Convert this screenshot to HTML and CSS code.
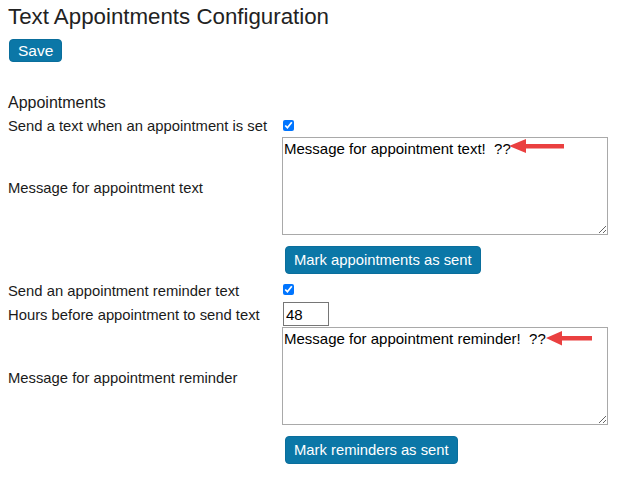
FILE: index.html
```html
<!DOCTYPE html>
<html>
<head>
<meta charset="utf-8">
<link rel="stylesheet" href="styles.css">
</head>
<body>
<h1 class="title">Text Appointments Configuration</h1>
<button class="btn btn-save">Save</button>
<h2 class="section">Appointments</h2>
<div class="form">
  <div class="label">Send a text when an appointment is set</div>
  <div class="cell cell-check"><input type="checkbox" class="check" checked></div>

  <div class="label label-ta">Message for appointment text</div>
  <div class="cell">
    <div class="ta-wrap">
      <textarea class="ta">Message for appointment text!  ??</textarea>
      <svg class="arrow arrow-1" width="60" height="16" viewBox="0 0 60 16">
        <polygon points="0,7 17,0 17,5 55,5 55,9.5 17,9.5 17,14" fill="#ea4040"/>
      </svg>
    </div>
  </div>

  <div class="label"></div>
  <div class="cell cell-btn"><button class="btn">Mark appointments as sent</button></div>

  <div class="label">Send an appointment reminder text</div>
  <div class="cell cell-check2"><input type="checkbox" class="check" checked></div>

  <div class="label">Hours before appointment to send text</div>
  <div class="cell cell-num"><input type="text" class="num" value="48"></div>

  <div class="label label-ta">Message for appointment reminder</div>
  <div class="cell">
    <div class="ta-wrap">
      <textarea class="ta">Message for appointment reminder!  ??</textarea>
      <svg class="arrow arrow-2" width="60" height="16" viewBox="0 0 60 16">
        <polygon points="0,7 16,0 16,5 46,5 46,9.5 16,9.5 16,14.5" fill="#ea4040"/>
      </svg>
    </div>
  </div>

  <div class="label"></div>
  <div class="cell cell-btn2"><button class="btn">Mark reminders as sent</button></div>
</div>
</body>
</html>
```
FILE: styles.css
```css
html, body {
  margin: 0;
  padding: 0;
  background: #ffffff;
}
body {
  padding: 0 8px;
  font-family: "Liberation Sans", Arial, sans-serif;
  color: #1a1a1a;
}
.title {
  margin: 3px 0 0 0;
  font-size: 22.3px;
  font-weight: normal;
  line-height: 27px;
  color: #222222;
}
.btn {
  font-family: "Liberation Sans", Arial, sans-serif;
  font-size: 14.8px;
  color: #ffffff;
  background: #0b77a7;
  border: 1px solid #0a6e9c;
  border-radius: 4px;
  padding: 0 8px;
  height: 28px;
  cursor: pointer;
}
.btn-save {
  margin: 9px 0 0 1px;
  height: 23px;
  padding: 0 8px;
  font-size: 15.5px;
  display: block;
}
.section {
  margin: 31px 0 0 0;
  font-size: 16px;
  font-weight: normal;
  line-height: 20px;
}
.form {
  display: grid;
  grid-template-columns: 274px auto;
  align-items: center;
}
.label {
  font-size: 14.8px;
  line-height: 17px;
  padding-top: 3px;
}
.label-ta {
  padding-top: 5px;
}
.cell-check {
  height: 24px;
  display: flex;
  align-items: center;
}
.cell-check2 {
  height: 23px;
  display: flex;
  align-items: center;
}
.check {
  width: 11px;
  height: 11px;
  margin: 0 0 0 1px;
}
.ta-wrap {
  position: relative;
  width: 326px;
  height: 98px;
}
.ta {
  box-sizing: border-box;
  width: 326px;
  height: 98px;
  margin: 0;
  display: block;
  font-family: "Liberation Sans", Arial, sans-serif;
  font-size: 15px;
  line-height: 17px;
  color: #000000;
  border: 1px solid #a9a9a9;
  padding: 2px 1px;
  resize: both;
}
.arrow {
  position: absolute;
}
.arrow-1 {
  left: 227px;
  top: 2px;
}
.arrow-2 {
  left: 264px;
  top: 4px;
}
.cell-btn {
  padding: 11px 0 4px 3px;
}
.cell-btn2 {
  padding: 11px 0 4px 3px;
}
.cell-num {
  padding: 1px 0 0 1px;
  height: 26px;
  box-sizing: border-box;
}
.num {
  box-sizing: border-box;
  width: 46px;
  height: 24px;
  margin: 0;
  padding: 1px 2px;
  font-family: "Liberation Sans", Arial, sans-serif;
  font-size: 15px;
  color: #000000;
  border: 1px solid #767676;
  display: block;
}
```
